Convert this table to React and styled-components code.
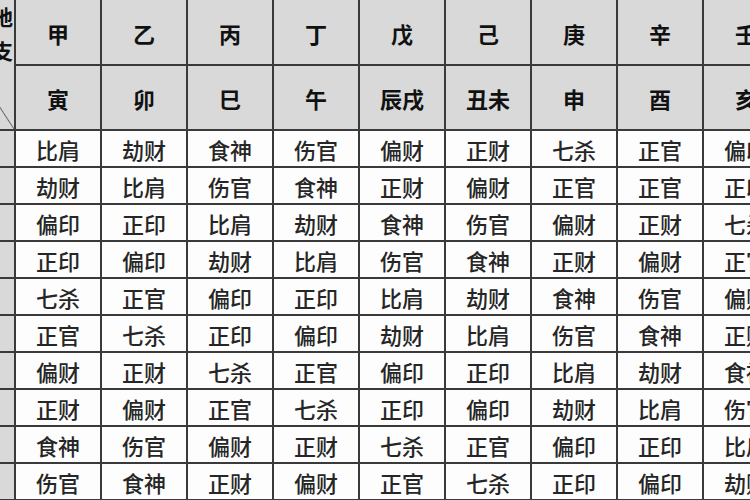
import React from "react";
import styled, { createGlobalStyle } from "styled-components";

const GlobalStyle = createGlobalStyle`
  html, body {
    margin: 0;
    padding: 0;
    background: #ffffff;
  }
  body {
    font-family: "Noto Sans CJK SC", "Noto Sans", sans-serif;
  }
`;

const Page = styled.div`
  width: 750px;
  height: 500px;
  overflow: hidden;
  background: #ffffff;
`;

// the sheet is wider than the window; the first column is mostly cut off on the left
const Sheet = styled.div`
  display: grid;
  grid-template-columns: repeat(11, 84px);
  grid-template-rows: 64px 63px repeat(10, 35px) 35px;
  gap: 2px;
  width: max-content;
  margin-left: -70px;
  background: #3a3a3a;
  padding-bottom: 2px;
`;

const Cell = styled.div`
  display: flex;
  align-items: center;
  justify-content: center;
  overflow: hidden;
  white-space: nowrap;
`;

const HeadCell = styled(Cell)`
  background: #d9d9d9;
  color: #111111;
  font-size: 22px;
  font-weight: 700;
  padding-top: 1px;
`;

const CornerCell = styled(Cell)`
  grid-row: span 2;
  flex-direction: column;
  align-items: flex-end;
  justify-content: flex-start;
  gap: 13px;
  padding: 6px 1px 0 0;
  color: #111111;
  font-size: 21px;
  font-weight: 700;
  line-height: 21px;
  background: linear-gradient(
    to top right,
    #d9d9d9 calc(50% - 1px),
    #6a6a6a 50%,
    #d9d9d9 calc(50% + 1px)
  );
`;

const SideCell = styled(Cell)`
  background: #d9d9d9;
`;

const DataCell = styled(Cell)`
  background: #fdfdfd;
  color: #262626;
  font-size: 22px;
  font-weight: 500;
`;

const stems = ["甲", "乙", "丙", "丁", "戊", "己", "庚", "辛", "壬", "癸"];
const branches = ["寅", "卯", "巳", "午", "辰戌", "丑未", "申", "酉", "亥", "子"];

const rows = [
  ["比肩", "劫财", "食神", "伤官", "偏财", "正财", "七杀", "正官", "偏印", "正印"],
  ["劫财", "比肩", "伤官", "食神", "正财", "偏财", "正官", "正官", "正印", "偏印"],
  ["偏印", "正印", "比肩", "劫财", "食神", "伤官", "偏财", "正财", "七杀", "正官"],
  ["正印", "偏印", "劫财", "比肩", "伤官", "食神", "正财", "偏财", "正官", "七杀"],
  ["七杀", "正官", "偏印", "正印", "比肩", "劫财", "食神", "伤官", "偏财", "正财"],
  ["正官", "七杀", "正印", "偏印", "劫财", "比肩", "伤官", "食神", "正财", "偏财"],
  ["偏财", "正财", "七杀", "正官", "偏印", "正印", "比肩", "劫财", "食神", "伤官"],
  ["正财", "偏财", "正官", "七杀", "正印", "偏印", "劫财", "比肩", "伤官", "食神"],
  ["食神", "伤官", "偏财", "正财", "七杀", "正官", "偏印", "正印", "比肩", "劫财"],
  ["伤官", "食神", "正财", "偏财", "正官", "七杀", "正印", "偏印", "劫财", "比肩"],
  ["", "", "", "", "", "", "", "", "", ""],
];

const App = () => {
  return (
    <Page>
      <GlobalStyle />
      <Sheet>
        {/* 天干 / 地支 表头 */}
        <CornerCell>
          <span>地</span>
          <span>支</span>
        </CornerCell>
        {stems.map((s) => (
          <HeadCell key={s}>{s}</HeadCell>
        ))}
        {branches.map((b) => (
          <HeadCell key={b}>{b}</HeadCell>
        ))}

        {/* 十神 */}
        {rows.map((row, i) => (
          <React.Fragment key={i}>
            <SideCell />
            {row.map((v, j) => (
              <DataCell key={j}>{v}</DataCell>
            ))}
          </React.Fragment>
        ))}
      </Sheet>
    </Page>
  );
};

export default App;
